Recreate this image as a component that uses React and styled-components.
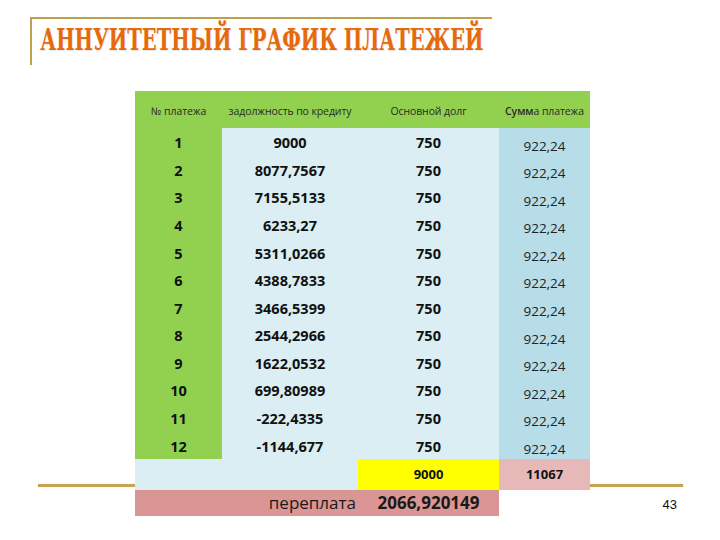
import React from "react";
import styled, { createGlobalStyle } from "styled-components";

const rows = [
  ["1", "9000"],
  ["2", "8077,7567"],
  ["3", "7155,5133"],
  ["4", "6233,27"],
  ["5", "5311,0266"],
  ["6", "4388,7833"],
  ["7", "3466,5399"],
  ["8", "2544,2966"],
  ["9", "1622,0532"],
  ["10", "699,80989"],
  ["11", "-222,4335"],
  ["12", "-1144,677"],
];

const GlobalStyle = createGlobalStyle`
  html, body {
    margin: 0;
    padding: 0;
    background: #ffffff;
  }
`;

const App = () => {
  return (
    <Slide>
      <GlobalStyle />
      <TitleFrame>
        <Title>АННУИТЕТНЫЙ ГРАФИК ПЛАТЕЖЕЙ</Title>
      </TitleFrame>
      <Main>
        <Table>
          <Head>№ платежа</Head>
          <Head>задолжность по кредиту</Head>
          <Head>Основной долг</Head>
          <Head>
            <b>Сумм</b>а платежа
          </Head>

          {rows.map(([n, debt]) => (
            <React.Fragment key={n}>
              <Cell $bg="#92d050">{n}</Cell>
              <Cell $bg="#daeef3">{debt}</Cell>
              <Cell $bg="#daeef3">750</Cell>
              <Payment>922,24</Payment>
            </React.Fragment>
          ))}

          <TotalCell $bg="#daeef3" $span={2} />
          <TotalCell $bg="#ffff00">9000</TotalCell>
          <TotalCell $bg="#e6b8b7">11067</TotalCell>

          <Overpay $span={2} $right>
            переплата
          </Overpay>
          <Overpay $bold>2066,920149</Overpay>
        </Table>
        <PageNumber>43</PageNumber>
      </Main>
    </Slide>
  );
};

export default App;

const Slide = styled.div`
  width: 720px;
  height: 540px;
  display: flex;
  flex-direction: column;
  background: #ffffff;
  overflow: hidden;
`;

const TitleFrame = styled.div`
  box-sizing: border-box;
  margin: 17px 0 0 30px;
  width: 462px;
  height: 48px;
  padding-top: 6px;
  border-top: 2px solid #bfa04c;
  border-left: 2px solid #bfa04c;
  display: flex;
  justify-content: center;
  align-items: flex-start;
`;

const Title = styled.h1`
  margin: 0;
  flex: none;
  white-space: nowrap;
  font-family: "DejaVu Serif", "Liberation Serif", serif;
  font-weight: 700;
  font-size: 30px;
  line-height: 1;
  color: #e66a0c;
  text-shadow: 1px 1px 1px rgba(180, 180, 180, 0.35);
  transform: scaleX(0.65);
  transform-origin: center;
`;

const Main = styled.div`
  position: relative;
  display: flex;
  align-items: flex-end;
  margin-top: 26px;

  &::before {
    content: "";
    position: absolute;
    left: 38px;
    top: 393px;
    width: 645px;
    height: 3px;
    background: #c4a256;
    box-shadow: 0 0 2px #f3e4b0;
  }
`;

const Table = styled.div`
  position: relative;
  z-index: 1;
  margin-left: 135px;
  display: grid;
  grid-template-columns: 87px 136px 141px 91px;
  grid-template-rows: 37px repeat(12, 27.58px) 31px 26px;
  font-family: "Open Sans", "Liberation Sans", sans-serif;
  color: #111;
`;

const Head = styled.div`
  background: #92d050;
  display: flex;
  align-items: center;
  justify-content: center;
  padding-top: 2px;
  font-size: 10.5px;
  letter-spacing: -0.1px;
  color: #2a2a2a;
  white-space: nowrap;

  b {
    font-weight: 600;
  }
`;

const Cell = styled.div`
  background: ${(p) => p.$bg};
  display: flex;
  align-items: center;
  justify-content: center;
  padding-top: 2px;
  box-sizing: border-box;
  font-size: 14.5px;
  font-weight: bold;
`;

const Payment = styled.div`
  background: #b7dde8;
  display: flex;
  align-items: flex-end;
  justify-content: center;
  padding-bottom: 1px;
  box-sizing: border-box;
  font-size: 13.5px;
  color: #222;
`;

const TotalCell = styled.div`
  grid-column: span ${(p) => p.$span || 1};
  background: ${(p) => p.$bg};
  display: flex;
  align-items: center;
  justify-content: center;
  font-size: 13px;
  font-weight: bold;
`;

const Overpay = styled.div`
  grid-column: span ${(p) => p.$span || 1};
  background: #d99694;
  display: flex;
  align-items: center;
  justify-content: ${(p) => (p.$right ? "flex-end" : "center")};
  padding-right: ${(p) => (p.$right ? "2px" : "0")};
  font-size: 17px;
  font-weight: ${(p) => (p.$bold ? "bold" : 500)};
  color: #1a1a1a;
`;

const PageNumber = styled.div`
  margin-left: auto;
  margin-right: 43px;
  margin-bottom: 4px;
  font-family: "Liberation Sans", Arial, sans-serif;
  font-size: 13px;
  line-height: 15px;
  color: #111;
`;
